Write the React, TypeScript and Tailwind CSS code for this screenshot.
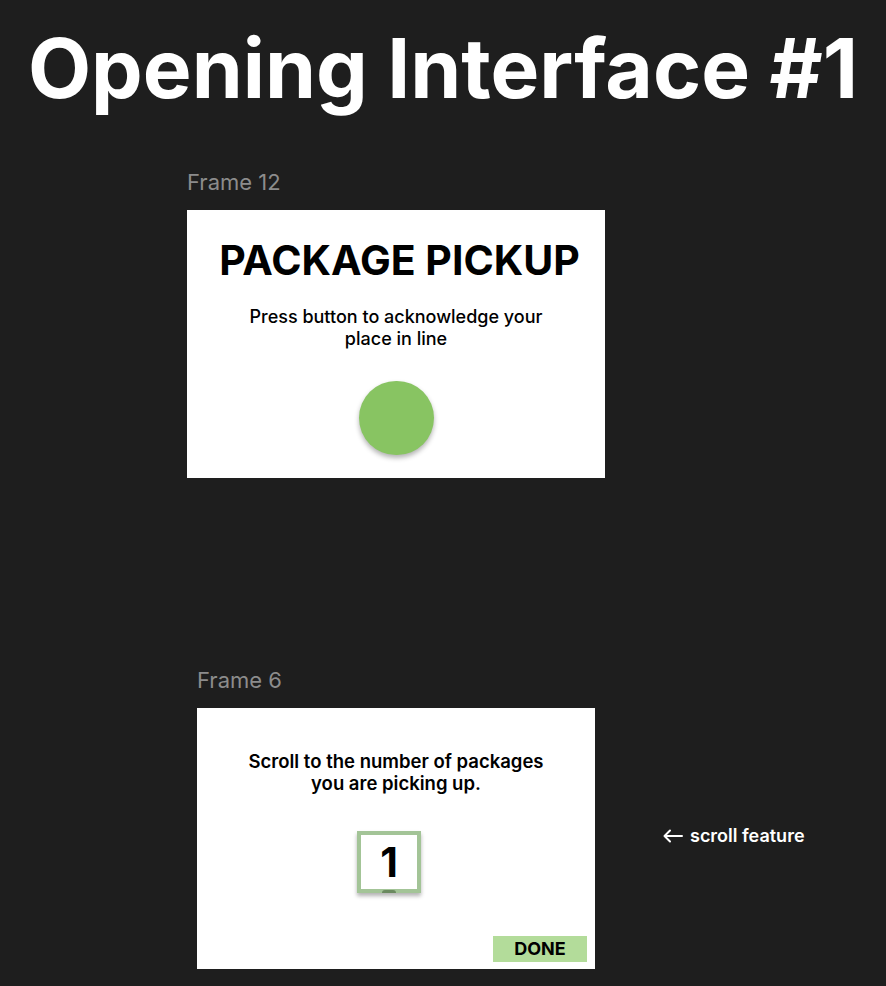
export default function App() {
  return (
    <div className="min-h-[986px] w-[886px] bg-[#1e1e1e] font-['Inter',sans-serif] overflow-hidden">
      <h1 className="pt-[28px] text-center text-[82px] leading-[82px] font-bold text-white">
        Opening Interface #1
      </h1>

      <section className="ml-[187px] mt-[59px]">
        <div className="text-[22px] leading-[26px] text-[#8c8c8c]">Frame 12</div>
        <div className="mt-[15px] w-[418px] h-[268px] bg-white flex flex-col items-center">
          <h2 className="mt-[26px] pl-[7px] text-[41px] leading-[48px] font-bold text-black">PACKAGE PICKUP</h2>
          <p className="mt-[22px] w-[320px] text-center text-[18px] leading-[22px] font-medium text-black">
            Press button to acknowledge your place in line
          </p>
          <button className="mt-[31px] w-[75px] h-[74px] rounded-full bg-[#88c462] shadow-[0_3px_5px_rgba(0,0,0,0.3)]" />
        </div>
      </section>

      <section className="ml-[197px] mt-[189px]">
        <div className="text-[22px] leading-[26px] text-[#8c8c8c]">Frame 6</div>
        <div className="mt-[15px] flex items-center">
          <div className="w-[398px] h-[261px] bg-white flex flex-col relative">
            <p className="mt-[42px] self-center w-[330px] text-center text-[18.5px] leading-[22px] font-semibold text-black">
              Scroll to the number of packages you are picking up.
            </p>
            <div className="mt-[37px] ml-[160px] w-[64px] h-[62px] border-[4px] border-[#a3c497] bg-white shadow-[0_3px_4px_rgba(0,0,0,0.3)] flex items-center justify-center relative">
              <span className="text-[41px] leading-none font-bold text-black">1</span>
              <span className="absolute bottom-[-4px] left-1/2 -translate-x-1/2 w-[14px] h-[3px] rounded-t-full bg-[#6b8a60]" />
            </div>
            <button className="absolute right-[8px] bottom-[7px] w-[94px] h-[26px] bg-[#b3dc9a] text-[18px] leading-[26px] font-bold text-black">
              DONE
            </button>
          </div>
          <div className="ml-[68px] mb-[6px] flex items-center gap-[7px] text-[18px] font-semibold text-white">
            <svg width="20" height="14" viewBox="0 0 20 14" fill="none" stroke="white" strokeWidth="2" strokeLinecap="round" strokeLinejoin="round">
              <path d="M19 7H1.5M7 1.5 1.5 7 7 12.5" />
            </svg>
            <span>scroll feature</span>
          </div>
        </div>
      </section>
    </div>
  );
}
